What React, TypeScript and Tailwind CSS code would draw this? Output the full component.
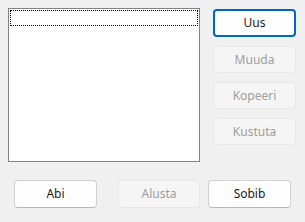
import React from 'react';

const base =
  "flex items-center justify-center rounded-[4px] text-[12px] leading-none";

function Btn({ label, kind = 'normal', className = '' }: { label: string; kind?: 'normal' | 'focus' | 'disabled'; className?: string }) {
  const look =
    kind === 'focus'
      ? "border-2 border-[#0067c0] bg-[#fdfdfd] text-[#1a1a1a]"
      : kind === 'disabled'
      ? "border border-[#e8e8e8] bg-[#f5f5f5] text-[#9d9d9d]"
      : "border border-[#d0d0d0] border-b-[#b8b8b8] bg-[#fdfdfd] text-[#1a1a1a]";
  return <div className={`${base} ${look} ${className}`}>{label}</div>;
}

export default function App() {
  return (
    <div
      className="w-[305px] h-[222px] bg-[#f0f0f0] flex flex-col"
      style={{ fontFamily: '"Noto Sans", "Open Sans", sans-serif' }}
    >
      <div className="flex pl-[8px] pt-[8px]">
        {/* Listbox */}
        <div className="w-[192px] h-[154px] bg-white border border-[#82828a] p-px">
          <div className="h-[16px] border border-dotted border-black" />
        </div>

        {/* Right buttons */}
        <div className="ml-[13px] mt-[1px] flex flex-col">
          <Btn label="Uus" kind="focus" className="w-[83px] h-[28px]" />
          <Btn label="Muuda" kind="disabled" className="w-[83px] h-[27px] mt-[9px]" />
          <Btn label="Kopeeri" kind="disabled" className="w-[83px] h-[27px] mt-[9px]" />
          <Btn label="Kustuta" kind="disabled" className="w-[83px] h-[27px] mt-[9px]" />
        </div>
      </div>

      {/* Bottom buttons */}
      <div className="flex mt-[18px] pl-[14px]">
        <Btn label="Abi" className="w-[83px] h-[28px]" />
        <Btn label="Alusta" kind="disabled" className="w-[82px] h-[28px] ml-[21px]" />
        <Btn label="Sobib" className="w-[83px] h-[28px] ml-[8px]" />
      </div>
    </div>
  );
}
